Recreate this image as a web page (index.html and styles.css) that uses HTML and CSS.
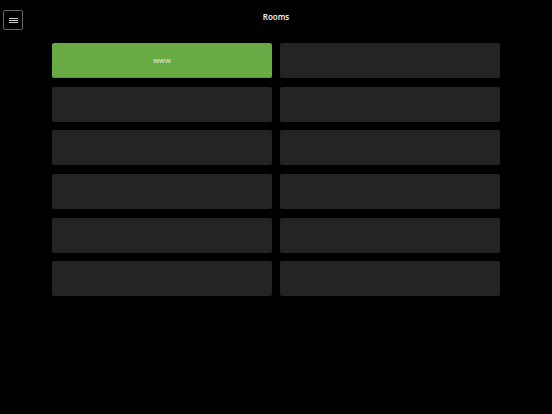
FILE: index.html
```html
<!DOCTYPE html>
<html lang="en">
<head>
    <meta charset="UTF-8">
    <meta name="viewport" content="width=device-width, initial-scale=1.0">
    <title>Rooms</title>
    <link rel="stylesheet" href="styles.css">
</head>
<body>
    <div class="header">
        <button class="menu-btn" aria-label="Menu">
            <span class="bars"></span>
        </button>
        <h1>Rooms</h1>
    </div>
    <div class="rooms">
        <div class="room active">www</div>
        <div class="room"></div>
        <div class="room"></div>
        <div class="room"></div>
        <div class="room"></div>
        <div class="room"></div>
        <div class="room"></div>
        <div class="room"></div>
        <div class="room"></div>
        <div class="room"></div>
        <div class="room"></div>
        <div class="room"></div>
    </div>
</body>
</html>
```
FILE: styles.css
```css
body {
    margin: 0;
    background-color: #000;
    color: #fff;
    font-family: 'Open Sans', 'Liberation Sans', sans-serif;
}
.header {
    position: relative;
    height: 43px;
}
.menu-btn {
    position: absolute;
    top: 10px;
    left: 3px;
    width: 20px;
    height: 20px;
    padding: 0;
    background: #000;
    border: 1px solid #666;
    border-radius: 2px;
    display: flex;
    align-items: center;
    justify-content: center;
    box-sizing: border-box;
}
.bars {
    display: block;
    width: 9px;
    height: 1px;
    background: #ccc;
    box-shadow: 0 -2px 0 #ccc, 0 2px 0 #ccc;
}
h1 {
    margin: 0;
    padding-top: 11px;
    text-align: center;
    font-size: 8px;
    font-weight: 600;
    line-height: 11px;
}
.rooms {
    display: grid;
    grid-template-columns: 220px 220px;
    grid-auto-rows: 35px;
    column-gap: 8px;
    row-gap: 8.65px;
    width: 448px;
    margin: 0 auto;
}
.room {
    background-color: #242424;
    border-radius: 2px;
    display: flex;
    align-items: center;
    justify-content: center;
    font-size: 7.5px;
    color: #e8f0e0;
}
.room.active {
    background-color: #6aaa45;
    border-bottom: 1px solid #5a9338;
    box-sizing: border-box;
}
```
